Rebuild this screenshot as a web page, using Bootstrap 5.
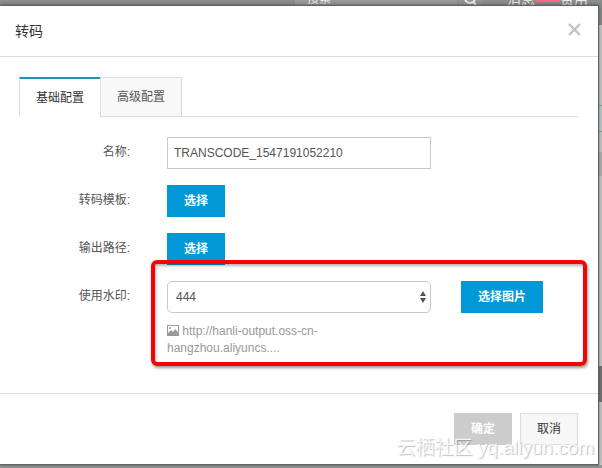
<!DOCTYPE html>
<html lang="zh-CN">
<head>
<meta charset="utf-8">
<meta name="viewport" content="width=device-width, initial-scale=1">
<title>转码</title>
<link href="https://cdn.jsdelivr.net/npm/bootstrap@5.3.0/dist/css/bootstrap.min.css" rel="stylesheet">
<style>
:root { --brand: #0099d5; --line: #ddd; }
body { font: 12px/18px "Liberation Sans", "Noto Sans CJK SC", sans-serif; color: #555; background: #ccc; }
.console-page { min-height: 100vh; overflow: hidden; }
/* console behind the dialog, scrolled by half of its top bar */
.backdrop-page { background: #cbcccb; z-index: 0; }
.top-bar { height: 53px; margin-top: -28px; background: #8c8e8f; color: #ededed; padding-right: 14px; }
.top-search { width: 188px; height: 53px; background: #999b9a; margin-right: 24px; }
.search-key { width: 26px; height: 53px; border-left: 1px solid #8c8e8f; background: #949696; }
.top-link { font-size: 14px; color: #ededed; text-decoration: none; }
.top-badge { width: 25px; height: 7px; background: #ff6687; }
.side-strip { width: 4px; margin-top: 80px; }
.strip-field { height: 27px; border: solid #66b3ae; border-width: 1px 0; background: #bfd0cf; }
.strip-handle { height: 24px; margin-top: 20px; background: #b5b5b5; }
.strip-chat { height: 36px; margin-top: 190px; background: #777; }
.page-foot { height: 3px; background: #969797; }
.dialog-box { z-index: 1; margin: 5px 3px 0 0; background: #fff; border: solid #5f6264; border-width: 1px 1px 1px 0; box-shadow: 0 0 4px rgba(0,0,0,.45); }
.dialog-head { height: 51px; padding: 0 17px 0 15px; border-bottom: 1px solid var(--line); }
.dialog-head h1 { font-size: 14px; line-height: 20px; color: #333; }
.close-key { border: 0; background: none; padding: 0 0 4px; line-height: 0; }
.dialog-main { padding: 20px 20px 36px 19px; }
.cfg-tabs { border-bottom: 1px solid var(--line); }
.cfg-tabs .nav-item { margin-bottom: -1px; }
.cfg-tabs .nav-link { height: 40px; margin: 0; padding: 0 16px; border: 1px solid var(--line); border-radius: 0; color: #555; background: #f9f8f8; }
.cfg-tabs .nav-item + .nav-item { margin-left: -1px; }
.cfg-tabs .nav-link.active { border-color: var(--line); border-top: 2px solid #1d96b1; border-bottom-color: #fff; color: #333; background: #fff; }
.cfg-form { padding-top: 20px; row-gap: 16px; }
.form-name { width: 111px; line-height: 30px; margin-right: 37px; flex: none; }
.field-col { flex: 0 1 264px; min-width: 0; }
.field-col .form-control, .field-col .form-select { height: 32px; padding: 0 6px; border: 1px solid #c8c8c8; border-radius: 0; font-size: 12px; color: #555; }
.field-col .form-select { padding: 0 20px 0 8px; border-radius: 5px; background-image: url("data:image/svg+xml,%3Csvg xmlns='http://www.w3.org/2000/svg' viewBox='0 0 6 12'%3E%3Cpath d='M0 5 3 0l3 5zM0 7h6l-3 5z' fill='%23555'/%3E%3C/svg%3E"); background-position: right 4px center; background-size: 6px 12px; }
.act-key { height: 32px; padding: 0 16px; border: 1px solid var(--brand); border-radius: 0; font-size: 12px; line-height: 18px; font-weight: 700; color: #fff; background: var(--brand); }
.act-key:hover { background: #0088c0; color: #fff; }
.side-key { margin-left: 30px; }
.pic-note { max-width: 176px; margin-top: 10px; line-height: 17px; color: #999; }
.pic-note svg { vertical-align: -1px; }
.mark-frame { top: -21px; right: -9px; bottom: -9px; left: 132px; border: 4px solid #f40404; border-radius: 6px; box-shadow: 1px 2px 3px rgba(0,0,0,.4), inset 1px 2px 3px rgba(0,0,0,.3); pointer-events: none; }
.dialog-foot { padding: 19px 20px; gap: 8px; border-top: 1px solid var(--line); }
.act-key.off-key:disabled { background: #ccc; border-color: #ccc; color: #fff; opacity: 1; }
.act-key.plain-key { background: #f7f7f7; border-color: var(--line); color: #333; font-weight: 400; }
.site-stamp { right: 8px; bottom: 7px; font: 19px/26px "Liberation Sans", "Noto Sans CJK SC", sans-serif; color: rgba(255,255,255,.85); text-shadow: 1px 1px 1px rgba(0,0,0,.25); z-index: 2; pointer-events: none; white-space: nowrap; }
</style>
<script src="https://cdn.jsdelivr.net/npm/bootstrap@5.3.0/dist/js/bootstrap.bundle.min.js"></script>
</head>
<body>
<div class="console-page position-relative d-flex flex-column">
  <div class="backdrop-page position-absolute top-0 start-0 w-100 h-100 d-flex flex-column overflow-hidden">
    <header class="top-bar d-flex align-items-center justify-content-end flex-shrink-0">
      <div class="top-search d-flex align-items-center justify-content-between ps-2">
        <span class="ps-1">搜索</span>
        <span class="search-key d-flex align-items-center justify-content-center">
          <svg width="13" height="14" viewBox="0 0 13 14" fill="none" stroke="#eee" stroke-width="2"><circle cx="6" cy="6" r="5"/><path d="m9 10 3 3"/></svg>
        </span>
      </div>
      <a class="top-link" href="#">消息</a>
      <span class="top-badge"></span>
      <a class="top-link" href="#">费用</a>
    </header>
    <div class="side-strip align-self-end">
      <div class="strip-field"></div>
      <div class="strip-handle"></div>
      <div class="strip-chat"></div>
    </div>
    <div class="page-foot mt-auto"></div>
  </div>

  <main class="dialog-box position-relative" role="dialog" aria-labelledby="dlgTitle">
    <div class="dialog-head d-flex align-items-center justify-content-between">
      <h1 class="m-0 fw-normal" id="dlgTitle">转码</h1>
      <button class="close-key" type="button" aria-label="关闭">
        <svg width="13" height="13" viewBox="0 0 13 13" stroke="#c2c2c2" stroke-width="2.4"><path d="m1 1 11 11M12 1 1 12"/></svg>
      </button>
    </div>

    <div class="dialog-main">
      <ul class="nav cfg-tabs">
        <li class="nav-item"><button class="nav-link active" type="button">基础配置</button></li>
        <li class="nav-item"><button class="nav-link" type="button">高级配置</button></li>
      </ul>
      <form class="cfg-form d-flex flex-column" id="cfgForm">
        <div class="d-flex align-items-start">
          <label class="form-name text-end" for="jobName">名称:</label>
          <div class="field-col"><input class="form-control" id="jobName" type="text" value="TRANSCODE_1547191052210"></div>
        </div>
        <div class="d-flex align-items-start">
          <label class="form-name text-end" for="tplKey">转码模板:</label>
          <button class="btn act-key" id="tplKey" type="button">选择</button>
        </div>
        <div class="d-flex align-items-start">
          <label class="form-name text-end" for="pathKey">输出路径:</label>
          <button class="btn act-key" id="pathKey" type="button">选择</button>
        </div>
        <div class="d-flex align-items-start position-relative">
          <label class="form-name text-end" for="wmSelect">使用水印:</label>
          <div class="field-col">
            <select class="form-select" id="wmSelect"><option>444</option></select>
            <div class="pic-note">
              <svg width="12" height="11" viewBox="0 0 12 11"><path d="M0 0h12v11H0z" fill="#999"/><path d="M1 1h10v6L8 4 6 7 4 5 1 8z" fill="#fff"/><circle cx="3" cy="3" r="1" fill="#999"/></svg>
              http://hanli-output.oss-cn-<wbr>hangzhou.aliyuncs....
            </div>
          </div>
          <button class="btn act-key side-key text-nowrap" type="button">选择图片</button>
          <div class="mark-frame position-absolute"></div>
        </div>
      </form>
    </div>

    <div class="dialog-foot d-flex justify-content-end">
      <button class="btn act-key off-key" type="submit" form="cfgForm" disabled>确定</button>
      <button class="btn act-key plain-key" type="button">取消</button>
    </div>
  </main>
  <div class="site-stamp position-absolute">云栖社区 yq.aliyun.com</div>
</div>
</body>
</html>
